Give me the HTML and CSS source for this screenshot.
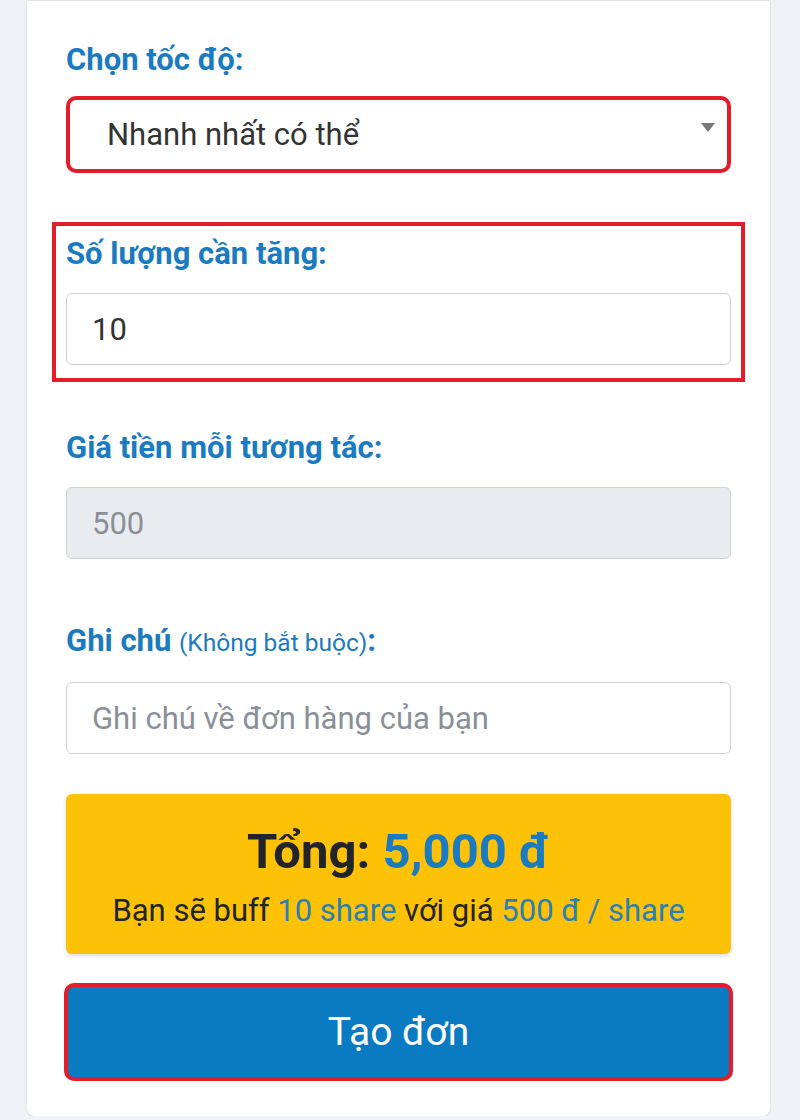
FILE: index.html
```html
<!DOCTYPE html>
<html lang="vi">
<head>
    <meta charset="UTF-8">
    <meta name="viewport" content="width=device-width, initial-scale=1.0">
    <title>Tạo đơn buff share</title>
    <link rel="stylesheet" href="styles.css">
</head>
<body>
    <div id="order-card">
        <div class="form-group">
            <label class="form-label">Chọn tốc độ:</label>
            <div class="select-box marked">
                <span>Nhanh nhất có thể</span>
                <span class="select-arrow"></span>
            </div>
        </div>

        <div class="form-group marked-group">
            <label class="form-label">Số lượng cần tăng:</label>
            <div class="form-input">10</div>
        </div>

        <div class="form-group">
            <label class="form-label">Giá tiền mỗi tương tác:</label>
            <div class="form-input disabled">500</div>
        </div>

        <div class="form-group">
            <label class="form-label">Ghi chú <small>(Không bắt buộc)</small>:</label>
            <div class="form-input placeholder">Ghi chú về đơn hàng của bạn</div>
        </div>

        <div id="total-box">
            <div class="total-line">Tổng: <span class="blue">5,000 đ</span></div>
            <div class="total-note">Bạn sẽ buff <span class="blue">10 share</span> với giá <span class="blue">500 đ / share</span></div>
        </div>

        <button id="submit-btn">Tạo đơn</button>
    </div>
</body>
</html>
```

FILE: styles.css
```css
body {
    font-family: Roboto, "Noto Sans", Arial, sans-serif;
    background-color: #f0f2f5;
    margin: 0;
    padding: 0;
}
#order-card {
    width: 743px;
    margin-left: 27px;
    background-color: #ffffff;
    border-top: 1px solid #e3e5e8;
    border-radius: 0 0 8px 8px;
    box-shadow: 0 1px 3px rgba(0, 0, 0, 0.12);
    padding: 39px 39px 35px;
    box-sizing: border-box;
}
.form-group {
    display: flex;
    flex-direction: column;
    margin-bottom: 62px;
}
.form-label {
    font-size: 31px;
    line-height: 36px;
    font-weight: bold;
    color: #1a7bc0;
    padding-top: 2px;
    margin-bottom: 21px;
}
.form-label small {
    font-size: 24.5px;
    font-weight: normal;
}
.select-box {
    height: 77px;
    box-sizing: border-box;
    border: 4px solid #e31c2a;
    border-radius: 10px;
    display: flex;
    align-items: center;
    justify-content: space-between;
    padding: 0 12px 0 37px;
    font-size: 31px;
    color: #333333;
    margin-top: -3px;
}
.select-arrow {
    width: 0;
    height: 0;
    border-left: 7px solid transparent;
    border-right: 7px solid transparent;
    border-top: 9px solid #777777;
    margin-bottom: 14px;
}
.form-group:first-child {
    margin-bottom: 49px;
}
.marked-group {
    border: 4px solid #e31c2a;
    margin: 0 -14px 46px;
    padding: 8px 10px 13px;
}
.form-input {
    height: 72px;
    box-sizing: border-box;
    border: 1px solid #cdd0d4;
    border-radius: 6px;
    display: flex;
    align-items: center;
    padding: 0 25px;
    font-size: 31px;
    color: #333333;
}
.form-input.disabled {
    background-color: #e9ecef;
    color: #8a9098;
}
.form-input.placeholder {
    color: #8a9098;
}
.form-group:nth-child(4) {
    margin-bottom: 40px;
}
#total-box {
    height: 160px;
    box-sizing: border-box;
    background-color: #fdc108;
    border-radius: 6px;
    box-shadow: 0 2px 4px rgba(0, 0, 0, 0.15);
    text-align: center;
    padding-top: 30px;
    color: #212529;
}
.total-line {
    font-size: 49px;
    font-weight: bold;
    line-height: 56px;
}
.total-note {
    font-size: 31px;
    line-height: 36px;
    margin-top: 13px;
}
.blue {
    color: #1a7bc0;
}
.total-note .blue {
    color: #2a7fb3;
}
#submit-btn {
    display: block;
    width: 669px;
    height: 98px;
    margin: 29px -2px 0;
    background-color: #0a7bc2;
    border: 4px solid #e31c2a;
    border-radius: 10px;
    color: #ffffff;
    font-family: inherit;
    font-size: 39px;
}
```
